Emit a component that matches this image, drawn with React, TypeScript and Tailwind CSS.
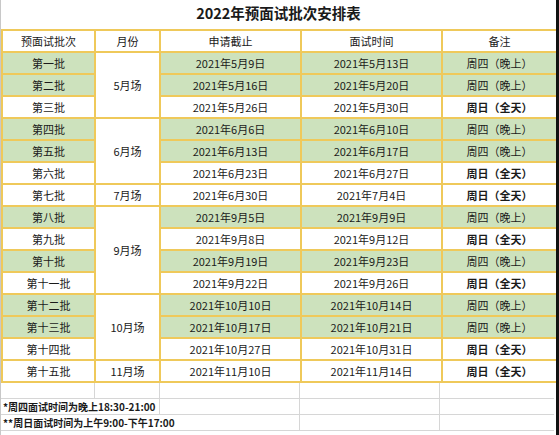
import React from "react";

type Row = { no: string; apply: string; date: string; thu: boolean };

const rows: Row[] = [
  { no: "第一批", apply: "2021年5月9日", date: "2021年5月13日", thu: true },
  { no: "第二批", apply: "2021年5月16日", date: "2021年5月20日", thu: true },
  { no: "第三批", apply: "2021年5月26日", date: "2021年5月30日", thu: false },
  { no: "第四批", apply: "2021年6月6日", date: "2021年6月10日", thu: true },
  { no: "第五批", apply: "2021年6月13日", date: "2021年6月17日", thu: true },
  { no: "第六批", apply: "2021年6月23日", date: "2021年6月27日", thu: false },
  { no: "第七批", apply: "2021年6月30日", date: "2021年7月4日", thu: false },
  { no: "第八批", apply: "2021年9月5日", date: "2021年9月9日", thu: true },
  { no: "第九批", apply: "2021年9月8日", date: "2021年9月12日", thu: false },
  { no: "第十批", apply: "2021年9月19日", date: "2021年9月23日", thu: true },
  { no: "第十一批", apply: "2021年9月22日", date: "2021年9月26日", thu: false },
  { no: "第十二批", apply: "2021年10月10日", date: "2021年10月14日", thu: true },
  { no: "第十三批", apply: "2021年10月17日", date: "2021年10月21日", thu: true },
  { no: "第十四批", apply: "2021年10月27日", date: "2021年10月31日", thu: false },
  { no: "第十五批", apply: "2021年11月10日", date: "2021年11月14日", thu: false },
];

// month cells merged over data rows: [label, first data row index, span]
const months: [string, number, string][] = [
  ["5月场", 0, "row-span-3"],
  ["6月场", 3, "row-span-3"],
  ["7月场", 6, "row-span-1"],
  ["9月场", 7, "row-span-4"],
  ["10月场", 11, "row-span-3"],
  ["11月场", 14, "row-span-1"],
];

// grid row for data row i (header sits on row 1)
const rowStart = [
  "row-start-2", "row-start-3", "row-start-4", "row-start-5", "row-start-6",
  "row-start-7", "row-start-8", "row-start-9", "row-start-10", "row-start-11",
  "row-start-12", "row-start-13", "row-start-14", "row-start-15", "row-start-16",
];

export default function App() {
  return (
    <div
      className="w-[559px] h-[435px] bg-white text-[#1a1a1a] border-l border-[#c8c8c8] border-r-[3px] border-r-[#111] overflow-hidden"
      style={{ fontFamily: '"Noto Sans CJK SC", "Liberation Sans", sans-serif' }}
    >
      {/* title */}
      <div className="h-[29px] flex items-center justify-center text-[14.5px] font-bold leading-none pb-[3px]">
        2022年预面试批次安排表
      </div>

      {/* main table */}
      <div className="grid grid-cols-[91px_63px_139px_139px_113px] auto-rows-[20px] gap-[2px] p-[2px] bg-[#efc95a] w-fit text-[11px] leading-none">
        {["预面试批次", "月份", "申请截止", "面试时间", "备注"].map((h) => (
          <div key={h} className="bg-white row-start-1 flex items-center justify-center">
            {h}
          </div>
        ))}

        {rows.map((r, i) => {
          const bg = r.thu ? "bg-[#cde2bd]" : "bg-white";
          return (
            <React.Fragment key={r.no}>
              <div className={`${bg} ${rowStart[i]} col-start-1 flex items-center justify-center`}>{r.no}</div>
              <div className={`${bg} ${rowStart[i]} col-start-3 flex items-center justify-center`}>{r.apply}</div>
              <div className={`${bg} ${rowStart[i]} col-start-4 flex items-center justify-center`}>{r.date}</div>
              <div className={`${bg} ${rowStart[i]} col-start-5 flex items-center justify-center ${r.thu ? "" : "font-bold"}`}>
                {r.thu ? "周四（晚上）" : "周日（全天）"}
              </div>
            </React.Fragment>
          );
        })}

        {months.map(([m, start, span]) => (
          <div key={m} className={`bg-white col-start-2 ${rowStart[start]} ${span} flex items-center justify-center`}>
            {m}
          </div>
        ))}
      </div>

      {/* notes */}
      <div className="grid grid-cols-[94px_65px_140px_140px_114px] auto-rows-[16px] text-[10px] font-bold leading-none">
        <div className="border-r border-b border-[#d6d6d6]" />
        <div className="border-r border-b border-[#d6d6d6]" />
        <div className="border-r border-b border-[#d6d6d6]" />
        <div className="border-r border-b border-[#d6d6d6]" />
        <div className="border-b border-[#d6d6d6]" />

        <div className="col-span-2 border-r border-b border-[#d6d6d6] flex items-center pl-[2px] whitespace-nowrap">
          *周四面试时间为晚上18:30-21:00
        </div>
        <div className="border-r border-b border-[#d6d6d6]" />
        <div className="border-r border-b border-[#d6d6d6]" />
        <div className="border-b border-[#d6d6d6]" />

        <div className="col-span-3 border-r border-b border-[#d6d6d6] flex items-center pl-[2px] whitespace-nowrap">
          **周日面试时间为上午9:00-下午17:00
        </div>
        <div className="border-r border-b border-[#d6d6d6]" />
        <div className="border-b border-[#d6d6d6]" />
      </div>
    </div>
  );
}
